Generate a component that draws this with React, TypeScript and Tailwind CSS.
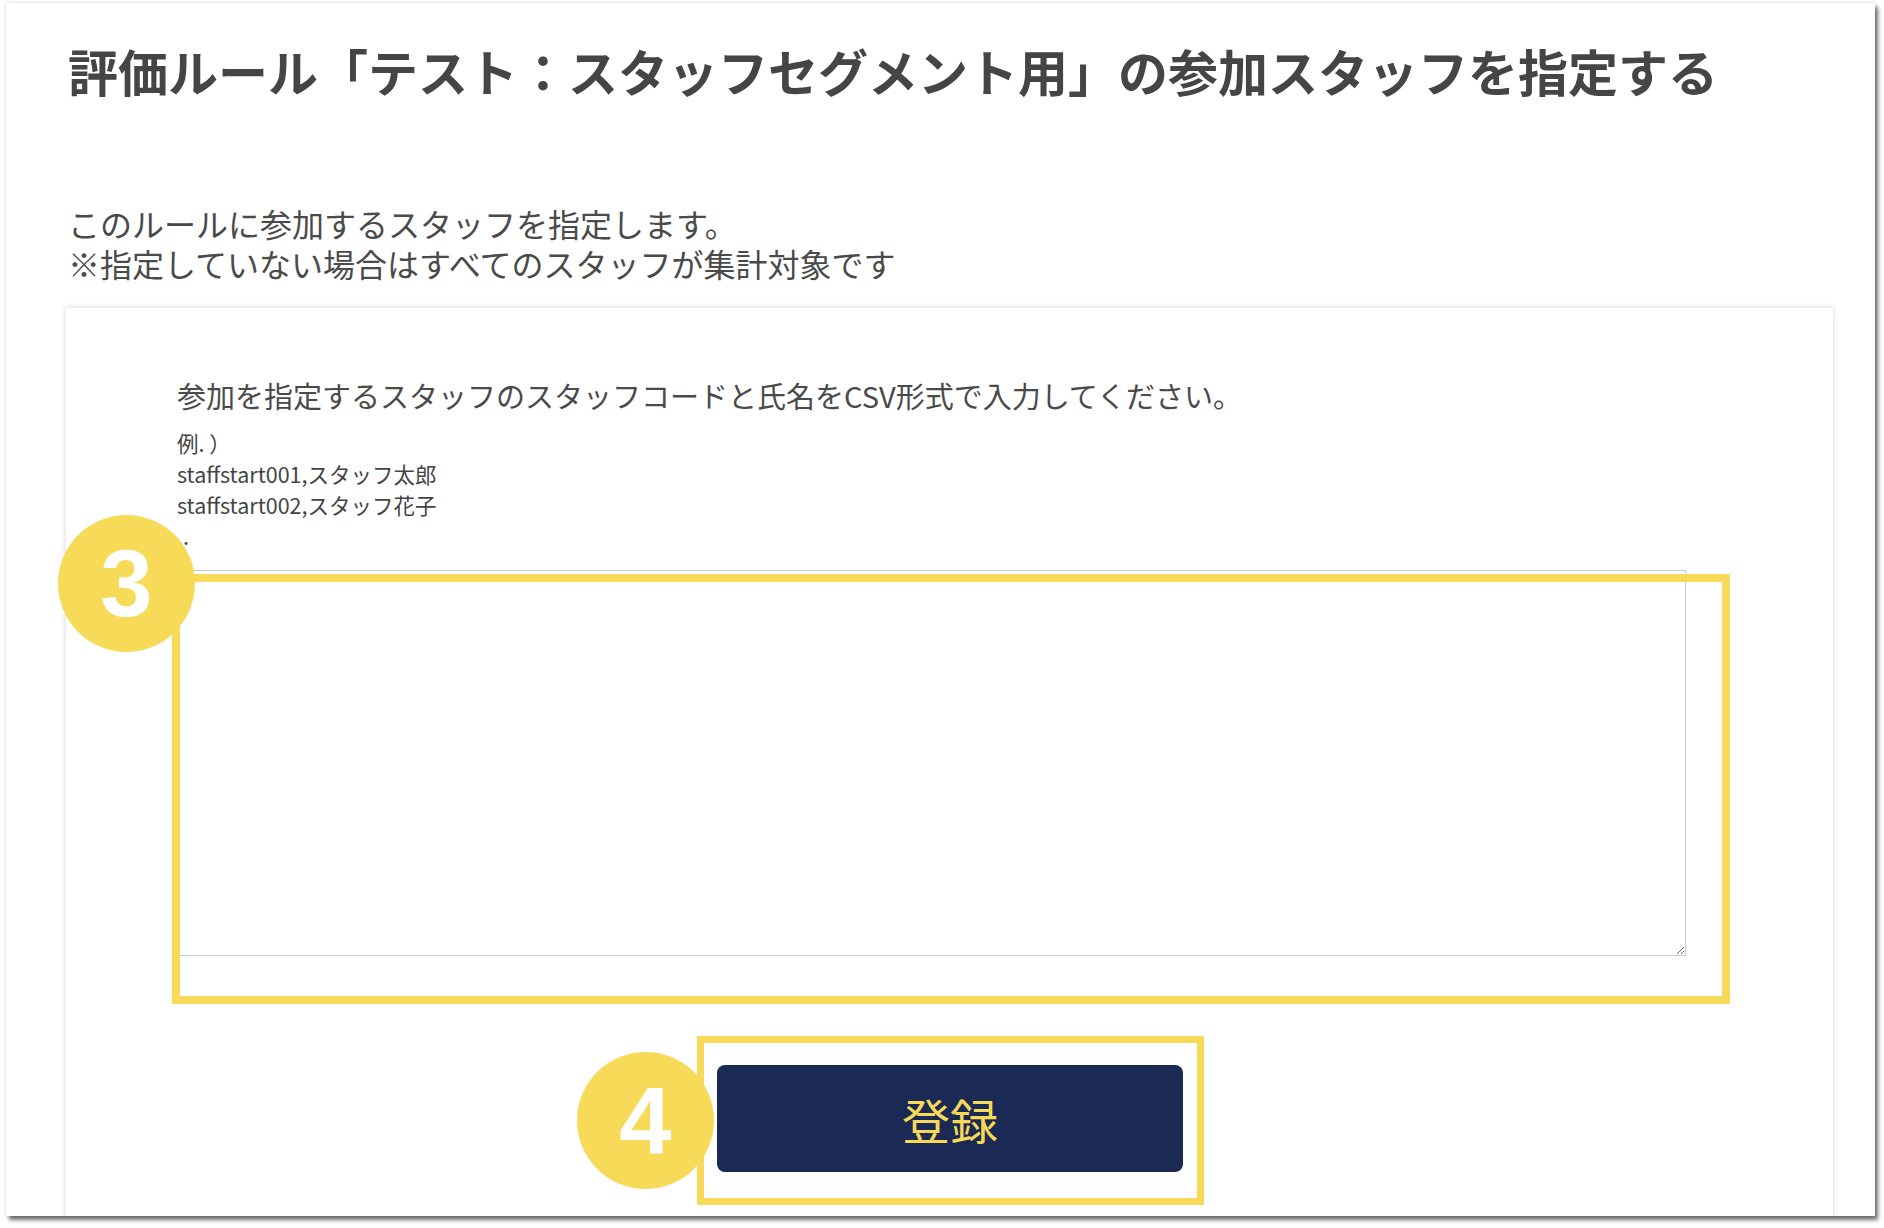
import React from "react";

const jp = { fontFamily: '"Noto Sans CJK JP", "Noto Sans", sans-serif' };

// numbered callout circle drawn over the form
const Badge = ({ n, className }: { n: string; className: string }) => (
  <div
    className={`absolute flex h-[137px] w-[137px] items-center justify-center rounded-full bg-[#f8da59] text-[94px] font-bold leading-none text-white ${className}`}
    style={{ fontFamily: '"Liberation Sans", Arial, sans-serif' }}
  >
    {n}
  </div>
);

const App = () => {
  return (
    <div className="h-[1228px] w-[1884px] bg-white pl-[6px] pt-[3px]" style={jp}>
      <div className="h-[1213px] w-[1869px] overflow-hidden bg-white shadow-[0_0_3px_rgba(0,0,0,0.18),3px_4px_4px_rgba(0,0,0,0.55)]">
        <h1 className="pl-[62px] pt-[32px] text-[50px] font-bold leading-[70px] text-[#454545]">
          評価ルール「テスト：スタッフセグメント用」の参加スタッフを指定する
        </h1>

        <div className="mt-[98px] pl-[62px] text-[32px] leading-[40px] text-[#4a4a4a]">
          <p>このルールに参加するスタッフを指定します。</p>
          <p>※指定していない場合はすべてのスタッフが集計対象です</p>
        </div>

        <div className="relative ml-[60px] mt-[25px] w-[1767px] bg-white pb-[60px] pl-[111px] pt-[67px] shadow-[0_0_6px_rgba(0,0,0,0.18)]">
          <p className="text-[29px] leading-[40px] text-[#4a4a4a]">
            参加を指定するスタッフのスタッフコードと氏名をCSV形式で入力してください。
          </p>
          <div className="mt-[12px] text-[21.5px] leading-[31px] text-[#444]">
            <p>例. ）</p>
            <p>staffstart001,スタッフ太郎</p>
            <p>staffstart002,スタッフ花子</p>
            <p>..</p>
          </div>

          <textarea className="mt-[19px] block h-[386px] w-[1509px] border border-[#cccccc] bg-white outline-none" />

          <div className="mt-[109px] flex w-[1546px] justify-center">
            <button className="h-[107px] w-[466px] rounded-[8px] bg-[#1b2a54] text-[48px] leading-none text-[#f8d858]">
              登録
            </button>
          </div>

          {/* highlight frames and step numbers */}
          <div className="pointer-events-none absolute left-[106px] top-[266px] h-[430px] w-[1558px] border-[8px] border-[#f8da59]" />
          <Badge n="3" className="left-[-8px] top-[207px]" />
          <div className="pointer-events-none absolute left-[631px] top-[728px] h-[169px] w-[507px] border-[7px] border-[#f8da59]" />
          <Badge n="4" className="left-[511px] top-[744px]" />
        </div>
      </div>
    </div>
  );
};

export default App;
